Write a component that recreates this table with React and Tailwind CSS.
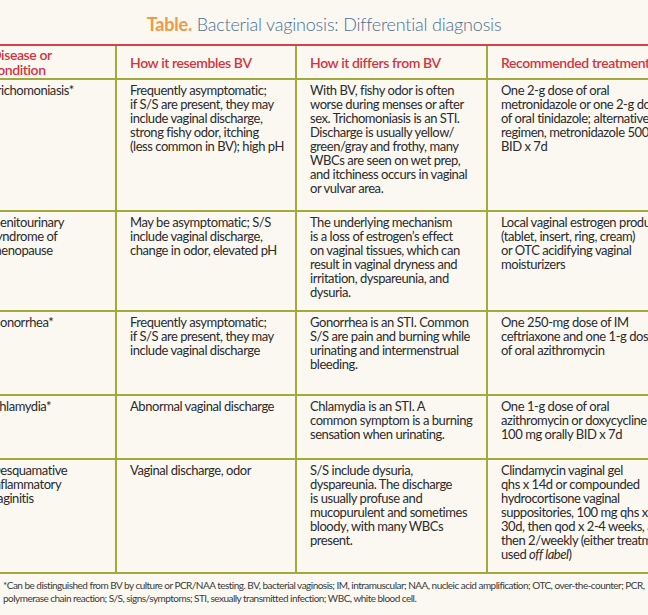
import React from 'react';

const rows = [
    {
        h: 'h-[132px]',
        disease: ['Trichomoniasis*'],
        resembles: ['Frequently asymptomatic;', 'if S/S are present, they may', 'include vaginal discharge,', 'strong fishy odor, itching', '(less common in BV); high pH'],
        differs: ['With BV, fishy odor is often', 'worse during menses or after', 'sex. Trichomoniasis is an STI.', 'Discharge is usually yellow/', 'green/gray and frothy, many', 'WBCs are seen on wet prep,', 'and itchiness occurs in vaginal', 'or vulvar area.'],
        treatment: ['One 2-g dose of oral', 'metronidazole or one 2-g dose', 'of oral tinidazole; alternative', 'regimen, metronidazole 500 mg', 'BID x 7d'],
    },
    {
        h: 'h-[100px]',
        disease: ['Genitourinary', 'syndrome of', 'menopause'],
        resembles: ['May be asymptomatic; S/S', 'include vaginal discharge,', 'change in odor, elevated pH'],
        differs: ['The underlying mechanism', 'is a loss of estrogen\u2019s effect', 'on vaginal tissues, which can', 'result in vaginal dryness and', 'irritation, dyspareunia, and', 'dysuria.'],
        treatment: ['Local vaginal estrogen products', '(tablet, insert, ring, cream)', 'or OTC acidifying vaginal', 'moisturizers'],
    },
    {
        h: 'h-[84px]',
        disease: ['Gonorrhea*'],
        resembles: ['Frequently asymptomatic;', 'if S/S are present, they may', 'include vaginal discharge'],
        differs: ['Gonorrhea is an STI. Common', 'S/S are pain and burning while', 'urinating and intermenstrual', 'bleeding.'],
        treatment: ['One 250-mg dose of IM', 'ceftriaxone and one 1-g dose', 'of oral azithromycin'],
    },
    {
        h: 'h-[64px]',
        disease: ['Chlamydia*'],
        resembles: ['Abnormal vaginal discharge'],
        differs: ['Chlamydia is an STI. A', 'common symptom is a burning', 'sensation when urinating.'],
        treatment: ['One 1-g dose of oral', 'azithromycin or doxycycline', '100 mg orally BID x 7d'],
    },
    {
        h: 'h-[114px]',
        disease: ['Desquamative', 'inflammatory', 'vaginitis'],
        resembles: ['Vaginal discharge, odor'],
        differs: ['S/S include dysuria,', 'dyspareunia. The discharge', 'is usually profuse and', 'mucopurulent and sometimes', 'bloody, with many WBCs', 'present.'],
        treatment: ['Clindamycin vaginal gel', 'qhs x 14d or compounded', 'hydrocortisone vaginal', 'suppositories, 100 mg qhs x', '30d, then qod x 2-4 weeks, and', 'then 2/weekly (either treatment', <>used <em>off label</em>)</>],
    },
];

const cols = ['w-[139px]', 'w-[180px]', 'w-[191px]', 'w-[200px]'];

const Cell = ({ w, last, lines }) => (
    <div className={`${w} shrink-0 px-[13px] pt-[3px] whitespace-nowrap overflow-hidden ${last ? '' : 'border-r-2 border-[#a2aa3c]'}`}>
        {lines.map((l, i) => (
            <div key={i}>{l}</div>
        ))}
    </div>
);

export default function App() {
    return (
        <div
            className="w-[648px] h-[615px] overflow-hidden bg-[#fbf8f2] text-[#2b2b2b]"
            style={{ fontFamily: 'Lato, "Open Sans", sans-serif' }}
        >
            <h1 className="h-[44px] pt-[13px] text-center text-[18px] leading-[22px] tracking-[-0.2px] text-[#4e6e93] font-light">
                <span className="font-bold text-[#ef9a45]">Table.</span> Bacterial vaginosis: Differential diagnosis
            </h1>

            <div className="ml-[-22px] w-[710px]">
                <div className="flex h-[36px] border-t-2 border-b-2 border-t-[#d6414a] border-b-[#a2aa3c] text-[14px] leading-[15px] tracking-[-0.4px] text-[#d3343e] font-semibold">
                    {[['Disease or', 'condition'], ['How it resembles BV'], ['How it differs from BV'], ['Recommended treatment']].map((t, i) => (
                        <div
                            key={i}
                            className={`${cols[i]} shrink-0 px-[13px] flex flex-col justify-center whitespace-nowrap ${i < 3 ? 'border-r-2 border-[#a2aa3c]' : ''}`}
                        >
                            {t.map((l) => (
                                <span key={l}>{l}</span>
                            ))}
                        </div>
                    ))}
                </div>

                {rows.map((r) => (
                    <div key={r.disease[0]} className={`flex ${r.h} border-b-2 border-[#a2aa3c] text-[13px] leading-[14px] tracking-[-0.45px]`}>
                        <Cell w={cols[0]} lines={r.disease} />
                        <Cell w={cols[1]} lines={r.resembles} />
                        <Cell w={cols[2]} lines={r.differs} />
                        <Cell w={cols[3]} lines={r.treatment} last />
                    </div>
                ))}
            </div>

            <div className="px-[3px] pt-[5px] text-[10px] leading-[13px] text-[#3a3a3a] tracking-[-0.52px] whitespace-nowrap">
                <div>*Can be distinguished from BV by culture or PCR/NAA testing. BV, bacterial vaginosis; IM, intramuscular; NAA, nucleic acid amplification; OTC, over-the-counter; PCR,</div>
                <div>polymerase chain reaction; S/S, signs/symptoms; STI, sexually transmitted infection; WBC, white blood cell.</div>
            </div>
        </div>
    );
}
